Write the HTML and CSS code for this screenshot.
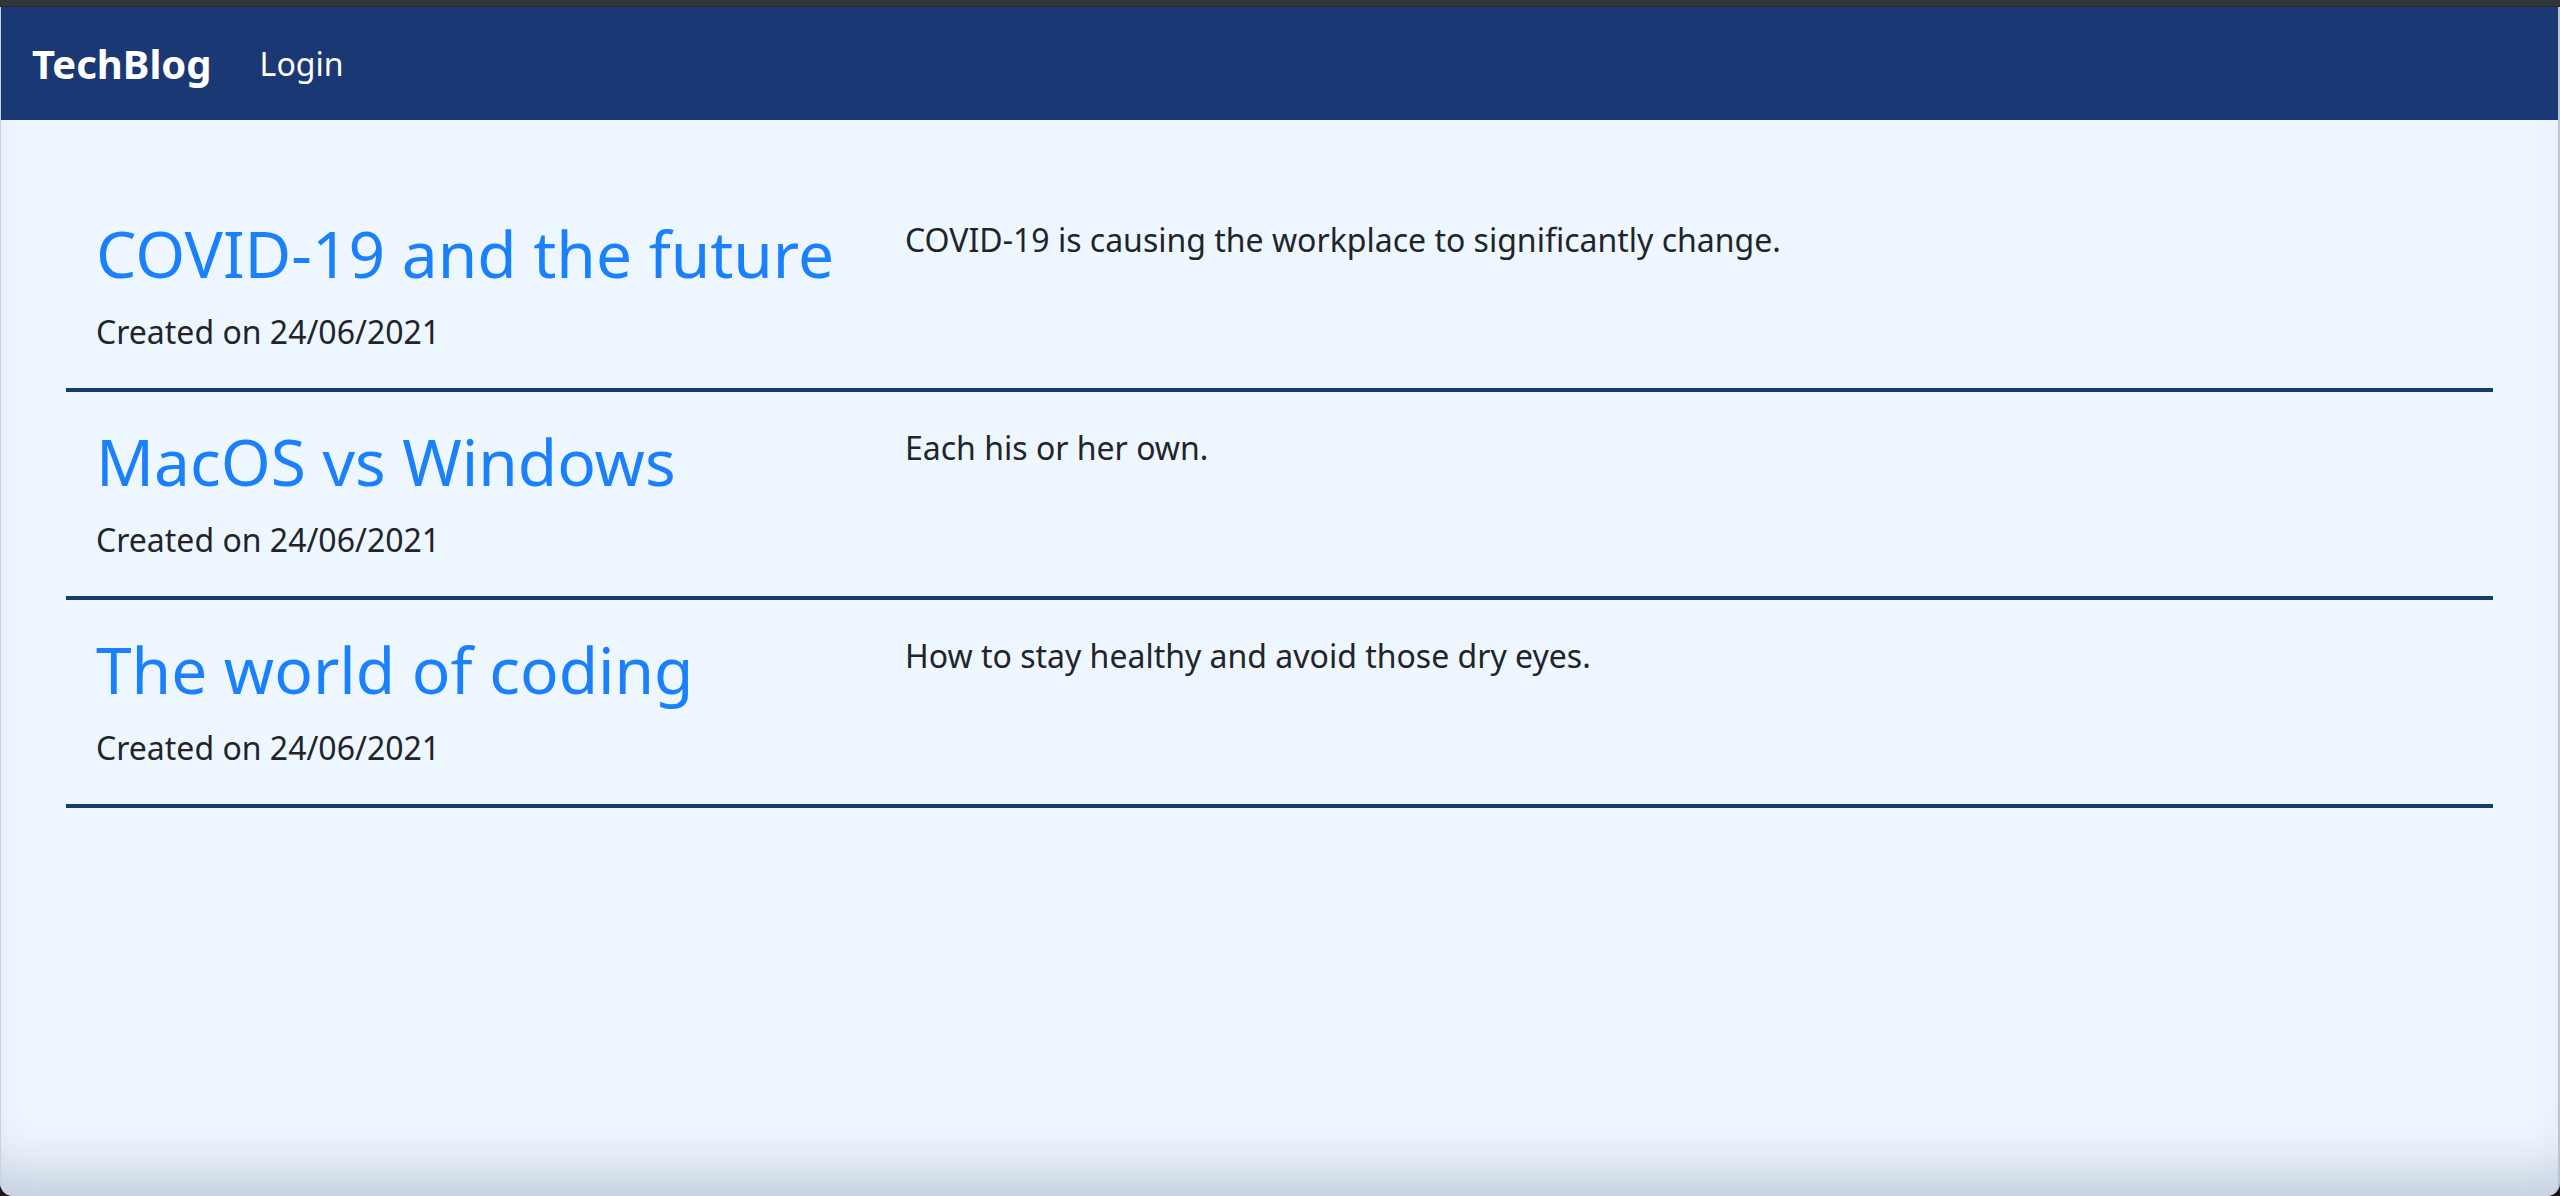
FILE: index.html
```html
<!DOCTYPE html>
<html lang="en">
<head>
<meta charset="utf-8">
<title>TechBlog</title>
<link rel="stylesheet" href="styles.css">
</head>
<body>
<div class="window">
  <div class="chrome"></div>
  <div class="page">
    <nav class="navbar">
      <a class="brand" href="#">TechBlog</a>
      <a class="nav-link" href="#">Login</a>
    </nav>
    <main class="posts">
      <article class="post">
        <div class="post-head">
          <h2 class="post-title">COVID-19 and the future</h2>
          <p class="post-date">Created on 24/06/2021</p>
        </div>
        <div class="post-body">
          <p class="post-desc">COVID-19 is causing the workplace to significantly change.</p>
        </div>
      </article>
      <article class="post">
        <div class="post-head">
          <h2 class="post-title">MacOS vs Windows</h2>
          <p class="post-date">Created on 24/06/2021</p>
        </div>
        <div class="post-body">
          <p class="post-desc">Each his or her own.</p>
        </div>
      </article>
      <article class="post">
        <div class="post-head">
          <h2 class="post-title">The world of coding</h2>
          <p class="post-date">Created on 24/06/2021</p>
        </div>
        <div class="post-body">
          <p class="post-desc">How to stay healthy and avoid those dry eyes.</p>
        </div>
      </article>
    </main>
  </div>
</div>
</body>
</html>
```

FILE: styles.css
```css
html, body {
  margin: 0;
  padding: 0;
}

body {
  width: 2560px;
  height: 1196px;
  overflow: hidden;
  background: #1e1418;
  font-family: "Noto Sans", "Open Sans", sans-serif;
  color: #212529;
}

.window {
  display: flex;
  flex-direction: column;
  height: 1196px;
}

.chrome {
  height: 7px;
  flex: none;
  background: #333437;
  border-bottom: 1px solid #26272a;
  box-sizing: border-box;
}

.page {
  flex: 1;
  background: #eef6ff;
  border-radius: 0 0 13px 13px;
  overflow: hidden;
  border-left: 1px solid #c9d3e0;
  border-right: 2px solid #b9c4d4;
  box-shadow: inset 0 -52px 50px -28px rgba(60, 80, 110, 0.24);
}

.navbar {
  height: 113px;
  background: #1a3873;
  display: flex;
  align-items: center;
  padding-left: 31px;
}

.brand {
  font-size: 40px;
  font-weight: 700;
  line-height: 60px;
  color: #fff;
  text-decoration: none;
  margin-right: 32px;
}

.nav-link {
  font-size: 32px;
  line-height: 48px;
  color: #fff;
  text-decoration: none;
  padding: 0 16px;
}

.posts {
  margin: 64px 65px 0 65px;
}

.post {
  display: grid;
  grid-template-columns: 1fr 2fr;
  padding-top: 32px;
  border-bottom: 4px solid #1a3873;
}

.post-head,
.post-body {
  padding: 0 30px;
}

.post-title {
  margin: 0 0 16px;
  font-size: 64px;
  font-weight: 400;
  line-height: 76px;
  color: #1a80fc;
}

.post-date,
.post-desc {
  margin: 0 0 32px;
  font-size: 32px;
  line-height: 1.5;
}
```
